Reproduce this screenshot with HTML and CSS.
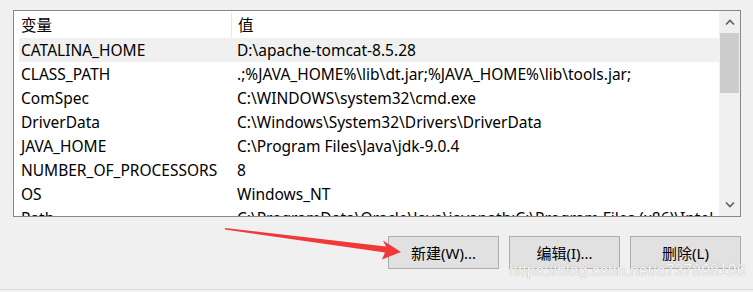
FILE: index.html
```html
<!doctype html>
<html lang="zh-CN">
  <head>
    <meta charset="UTF-8" />
    <title>环境变量</title>
    <link rel="stylesheet" href="styles.css">
  </head>
  <body>
    <div class="panel">
      <div class="listbox">
        <div class="list-content">
          <div class="list-header">
            <div class="cell">变量</div>
            <div class="cell value">值</div>
          </div>
          <div class="row selected">
            <div class="cell">CATALINA_HOME</div>
            <div class="cell value">D:\apache-tomcat-8.5.28</div>
          </div>
          <div class="row">
            <div class="cell">CLASS_PATH</div>
            <div class="cell value">.;%JAVA_HOME%\lib\dt.jar;%JAVA_HOME%\lib\tools.jar;</div>
          </div>
          <div class="row">
            <div class="cell">ComSpec</div>
            <div class="cell value">C:\WINDOWS\system32\cmd.exe</div>
          </div>
          <div class="row">
            <div class="cell">DriverData</div>
            <div class="cell value">C:\Windows\System32\Drivers\DriverData</div>
          </div>
          <div class="row">
            <div class="cell">JAVA_HOME</div>
            <div class="cell value">C:\Program Files\Java\jdk-9.0.4</div>
          </div>
          <div class="row">
            <div class="cell">NUMBER_OF_PROCESSORS</div>
            <div class="cell value">8</div>
          </div>
          <div class="row">
            <div class="cell">OS</div>
            <div class="cell value">Windows_NT</div>
          </div>
          <div class="row">
            <div class="cell">Path</div>
            <div class="cell value">C:\ProgramData\Oracle\Java\javapath;C:\Program Files (x86)\Intel</div>
          </div>
        </div>
        <div class="scrollbar">
          <div class="scroll-arrow">
            <svg width="10" height="6" viewBox="0 0 10 6"><path d="M1 5.5 L5 1.5 L9 5.5" fill="none" stroke="#606060" stroke-width="1.6"/></svg>
          </div>
          <div class="scroll-thumb"></div>
          <div class="scroll-track"></div>
          <div class="scroll-arrow">
            <svg width="10" height="6" viewBox="0 0 10 6"><path d="M1 0.5 L5 4.5 L9 0.5" fill="none" stroke="#606060" stroke-width="1.6"/></svg>
          </div>
        </div>
      </div>

      <div class="buttons">
        <button class="btn">新建(W)...</button>
        <button class="btn">编辑(I)...</button>
        <button class="btn">删除(L)</button>
      </div>
    </div>
    <div class="footer-line"></div>

    <!-- annotation drawn over the dialog -->
    <svg class="arrow" width="753" height="292" viewBox="0 0 753 292">
      <polygon points="225,228 386,246.5 383,240.5 401,252 382,259.5 385,252.5 225,229.5" fill="#f03a3a"/>
    </svg>
    <div class="watermark">https://blog.csdn.net/a737898196</div>
  </body>
</html>
```

FILE: styles.css
```css
body {
  margin: 0;
  width: 753px;
  height: 292px;
  overflow: hidden;
  background: #f0f0f0;
  font-family: "Noto Sans", "Noto Sans CJK SC", sans-serif;
  font-size: 15.5px;
  color: #000;
  position: relative;
}
.panel {
  padding: 10px 12px 0 13px;
}
.listbox {
  display: flex;
  height: 205px;
  border: 1px solid #828790;
  background: #fff;
}
.list-content {
  flex: 1;
  padding-left: 5px;
  overflow: hidden;
  white-space: nowrap;
}
.list-header,
.row {
  display: grid;
  grid-template-columns: 212px 1fr;
  align-items: center;
}
.list-header {
  height: 27px;
}
.row {
  height: 24px;
}
.row.selected {
  background: #f0f0f0;
}
.cell {
  padding-left: 2px;
  line-height: 24px;
  overflow: hidden;
}
.value {
  padding-left: 6px;
}
.list-header .value {
  border-left: 1px solid #e5e5e5;
  padding-left: 6px;
}
.scrollbar {
  width: 21px;
  display: flex;
  flex-direction: column;
  background: #f0f0f0;
}
.scroll-arrow {
  height: 22px;
  display: flex;
  align-items: center;
  justify-content: center;
}
.scroll-thumb {
  height: 60px;
  margin: 0 1px;
  background: #cdcdcd;
}
.scroll-track {
  flex: 1;
}
.buttons {
  display: flex;
  justify-content: flex-end;
  gap: 10px;
  margin-top: 19px;
}
.btn {
  width: 111px;
  height: 33px;
  padding: 0;
  border: 1px solid #adadad;
  background: #e1e1e1;
  font-family: inherit;
  font-size: 15px;
  color: #000;
}
.footer-line {
  position: absolute;
  left: 0;
  right: 0;
  top: 289px;
  border-top: 1px solid #dcdcdc;
}
.arrow {
  position: absolute;
  left: 0;
  top: 0;
}
.watermark {
  position: absolute;
  left: 509px;
  top: 262px;
  font-family: "Liberation Sans", sans-serif;
  font-size: 16px;
  color: #f6f6f6;
  text-shadow: 0 0 1px #9a9a9a;
}
```
